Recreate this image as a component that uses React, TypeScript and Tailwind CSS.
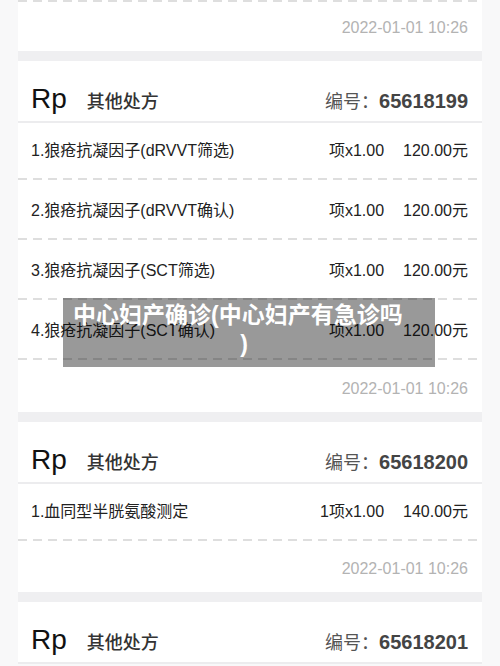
const font = "font-['Liberation_Sans','Noto_Sans_CJK_SC',sans-serif]";

type Item = { name: string; qty: string; price: string };

type Rx = { no: string; items: Item[] };

const prescriptions: Rx[] = [
  {
    no: "65618199",
    items: [
      { name: "1.狼疮抗凝因子(dRVVT筛选)", qty: "项x1.00", price: "120.00元" },
      { name: "2.狼疮抗凝因子(dRVVT确认)", qty: "项x1.00", price: "120.00元" },
      { name: "3.狼疮抗凝因子(SCT筛选)", qty: "项x1.00", price: "120.00元" },
      { name: "4.狼疮抗凝因子(SCT确认)", qty: "项x1.00", price: "120.00元" },
    ],
  },
  {
    no: "65618200",
    items: [{ name: "1.血同型半胱氨酸测定", qty: "1项x1.00", price: "140.00元" }],
  },
  { no: "65618201", items: [] },
];

function Dash() {
  return (
    <div className="h-[2px] w-full bg-[linear-gradient(to_right,#dedede_9px,transparent_9px)] bg-[length:15px_2px]" />
  );
}

function Stamp({ className = "" }: { className?: string }) {
  return (
    <div className={`flex items-center justify-end pr-[14px] text-[16px] text-[#b3b3b3] ${className}`}>
      2022-01-01 10:26
    </div>
  );
}

function Band() {
  return <div className="h-[10px] bg-[#efeff1]" />;
}

function Header({ no }: { no: string }) {
  return (
    <>
      <div className="flex h-[60px] items-center pl-[13px] pr-[14px] pt-[16px]">
        <span className="text-[28px] leading-none text-[#111]">Rp</span>
        <span className="ml-[20px] mt-[6px] text-[18px] font-medium text-[#333]">其他处方</span>
        <span className="ml-auto mt-[4px] text-[18px] text-[#555]">
          编号：<span className="text-[20px] font-bold text-[#444]">{no}</span>
        </span>
      </div>
      <div className="h-[2px] bg-[#ececee]" />
    </>
  );
}

function Row({ item, first }: { item: Item; first: boolean }) {
  return (
    <>
      <div
        className={`flex items-center pl-[13px] pr-[14px] text-[16px] text-[#222] ${
          first ? "h-[55px]" : "h-[58px] pt-1"
        }`}
      >
        <span>{item.name}</span>
        <span className="ml-auto">{item.qty}</span>
        <span className="ml-[19px]">{item.price}</span>
      </div>
      <Dash />
    </>
  );
}

export default function App() {
  return (
    <div className={`relative h-[666px] w-[500px] overflow-hidden bg-[#f8f8f9] ${font}`}>
      <div className="mx-[18px] bg-white">
        <Dash />
        <Stamp className="h-[49px] pt-[3px]" />
        {prescriptions.map((rx, i) => (
          <div key={rx.no}>
            <Band />
            <Header no={rx.no} />
            {rx.items.map((item, j) => (
              <Row key={item.name} item={item} first={j === 0} />
            ))}
            {i === 0 && <Stamp className="h-[52px] pt-[6px]" />}
            {i === 1 && <Stamp className="h-[51px] pt-[4px]" />}
          </div>
        ))}
      </div>

      <div className="absolute left-[63px] top-[298px] h-[69px] w-[372px] bg-black/40 pt-[3px] text-[23px] font-bold leading-[29px] text-white">
        <div className="whitespace-nowrap pl-[10px]">中心妇产确诊(中心妇产有急诊吗</div>
        <div className="pr-[10px] text-center">)</div>
      </div>
    </div>
  );
}
